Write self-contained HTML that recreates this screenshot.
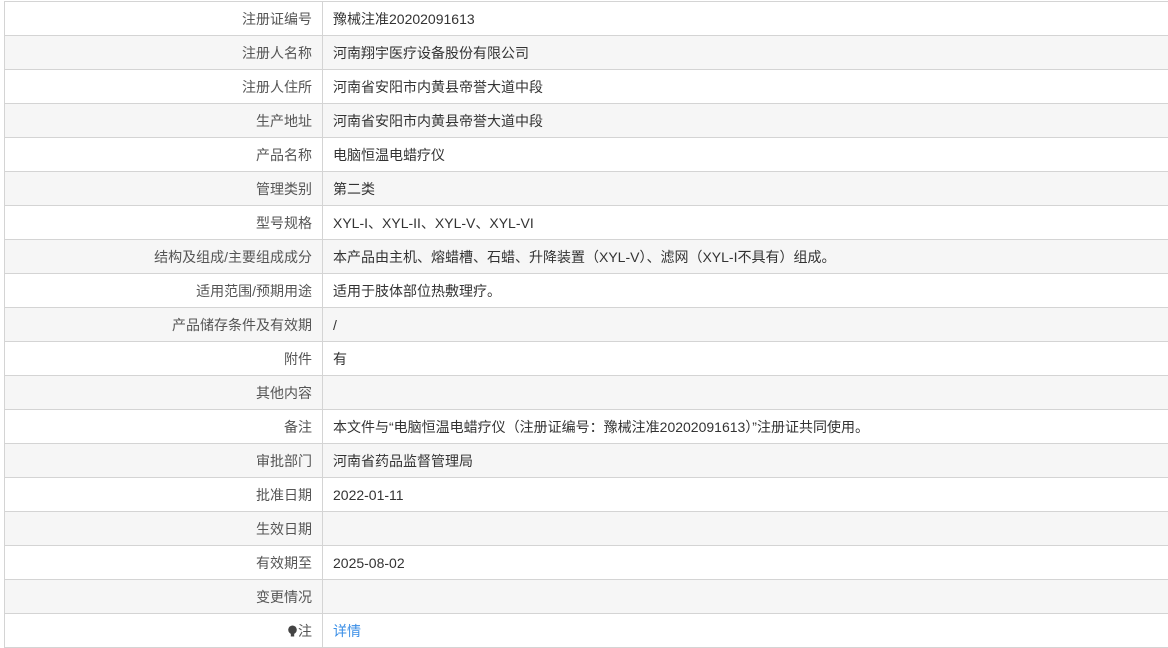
<!DOCTYPE html>
<html><head><meta charset="utf-8"><style>
html,body{margin:0;padding:0;background:#fff;width:1168px;height:643px;overflow:hidden}
table{position:absolute;left:4px;top:1px;width:1166px;border-collapse:collapse;font-family:"Liberation Sans","Noto Sans CJK SC",sans-serif;font-size:14px;color:#333}
td{border:1px solid #d4d4d4;height:34px;padding:2px 10px 0;box-sizing:border-box;line-height:31px;white-space:nowrap}
td.l{width:318px;text-align:right;color:#555}
tr:nth-child(even) td{background:#f6f6f6}
a{color:#3a8ee6;text-decoration:none}
</style></head><body>
<table>
<tr><td class="l">注册证编号</td><td>豫械注准20202091613</td></tr>
<tr><td class="l">注册人名称</td><td>河南翔宇医疗设备股份有限公司</td></tr>
<tr><td class="l">注册人住所</td><td>河南省安阳市内黄县帝誉大道中段</td></tr>
<tr><td class="l">生产地址</td><td>河南省安阳市内黄县帝誉大道中段</td></tr>
<tr><td class="l">产品名称</td><td>电脑恒温电蜡疗仪</td></tr>
<tr><td class="l">管理类别</td><td>第二类</td></tr>
<tr><td class="l">型号规格</td><td>XYL-I、XYL-II、XYL-V、XYL-VI</td></tr>
<tr><td class="l">结构及组成/主要组成成分</td><td>本产品由主机、熔蜡槽、石蜡、升降装置（XYL-V）、滤网（XYL-I不具有）组成。</td></tr>
<tr><td class="l">适用范围/预期用途</td><td>适用于肢体部位热敷理疗。</td></tr>
<tr><td class="l">产品储存条件及有效期</td><td>/</td></tr>
<tr><td class="l">附件</td><td>有</td></tr>
<tr><td class="l">其他内容</td><td></td></tr>
<tr><td class="l">备注</td><td>本文件与“电脑恒温电蜡疗仪（注册证编号：豫械注准20202091613）”注册证共同使用。</td></tr>
<tr><td class="l">审批部门</td><td>河南省药品监督管理局</td></tr>
<tr><td class="l">批准日期</td><td>2022-01-11</td></tr>
<tr><td class="l">生效日期</td><td></td></tr>
<tr><td class="l">有效期至</td><td>2025-08-02</td></tr>
<tr><td class="l">变更情况</td><td></td></tr>
<tr><td class="l"><svg width="11" height="12" viewBox="0 0 11 12" style="vertical-align:-1px"><circle cx="5.5" cy="4.8" r="4.3" fill="#444"/><rect x="3.8" y="8.5" width="3.4" height="3" fill="#444"/></svg>注</td><td><a>详情</a></td></tr>
</table>
</body></html>
